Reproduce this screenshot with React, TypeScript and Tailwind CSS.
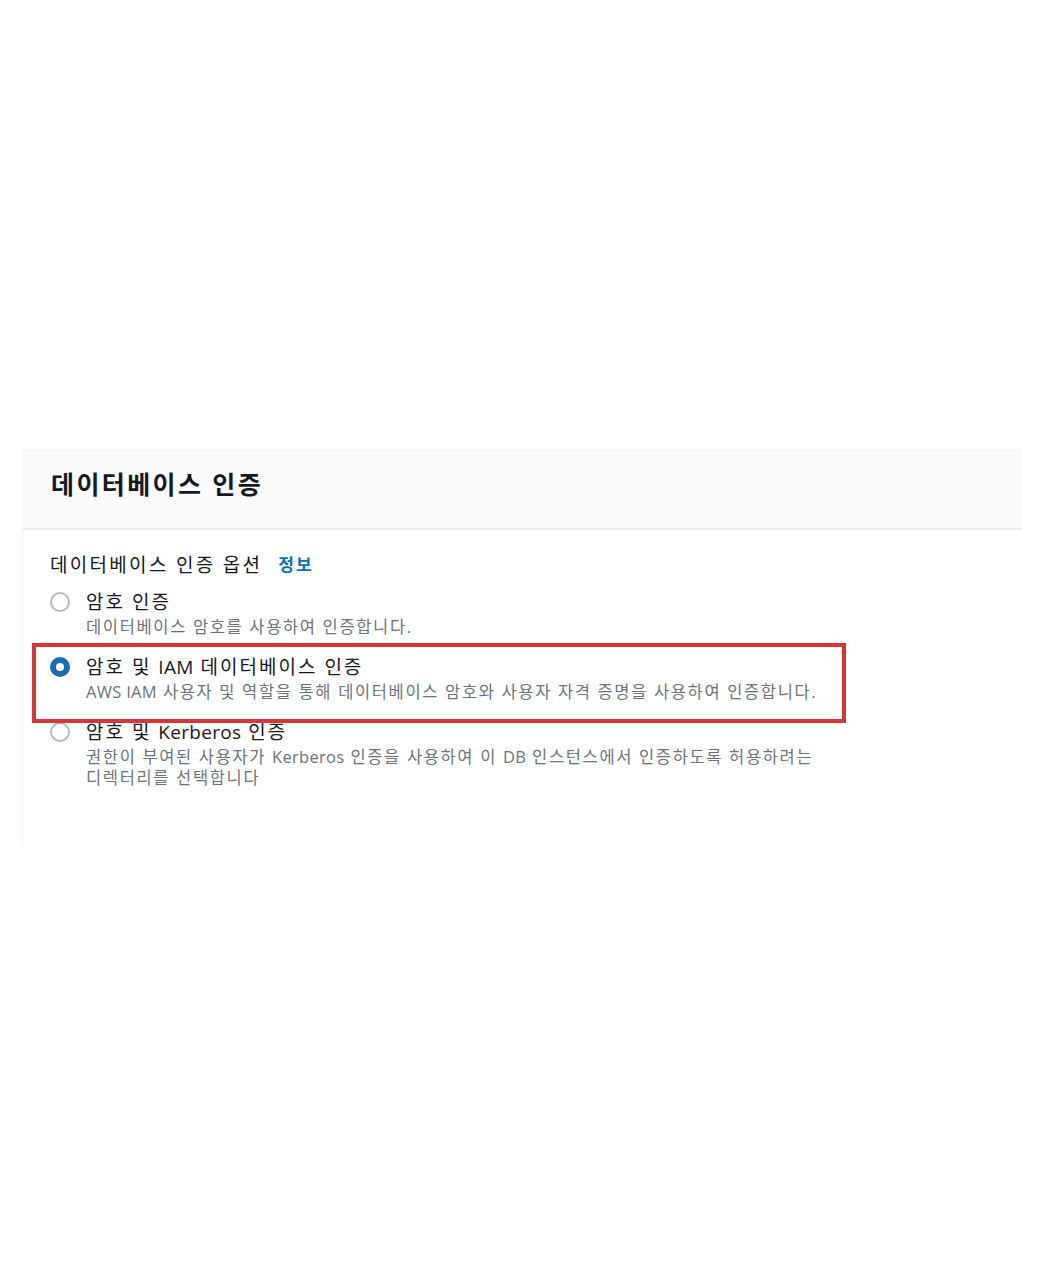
import React from "react";

const font = { fontFamily: '"Open Sans", "Noto Sans CJK KR", sans-serif' };

function T({ text }: { text: string }) {
  const parts = text.split(/([A-Za-z][A-Za-z ]*[A-Za-z]|[A-Za-z])/);
  return (
    <>
      {parts.map((p, i) =>
        /^[A-Za-z]/.test(p) ? (
          <span key={i} className="tracking-[0.3px]">
            {p}
          </span>
        ) : (
          <React.Fragment key={i}>{p}</React.Fragment>
        )
      )}
    </>
  );
}

function Radio({ checked }: { checked?: boolean }) {
  return checked ? (
    <span className="mt-[2px] flex h-[20px] w-[20px] shrink-0 items-center justify-center rounded-full bg-[#1a6cb8]">
      <span className="h-[8px] w-[8px] rounded-full bg-white" />
    </span>
  ) : (
    <span className="mt-[2px] h-[20px] w-[20px] shrink-0 rounded-full border-2 border-[#b4bcbe] bg-white" />
  );
}

function Option({
  title,
  desc,
  checked,
}: {
  title: React.ReactNode;
  desc: React.ReactNode;
  checked?: boolean;
}) {
  return (
    <div className="flex gap-[16px]">
      <Radio checked={checked} />
      <div className="flex flex-col">
        <div className="text-[19px] leading-[24px] tracking-[2px] text-[#16191f]">{title}</div>
        <div className="mt-[2px] text-[16.5px] leading-[21px] tracking-[1.65px] text-[#6b747c]">{desc}</div>
      </div>
    </div>
  );
}

export default function App() {
  return (
    <div className="relative h-[1274px] w-full bg-white" style={font}>
      <div className="h-[449px]" />
      <div className="mx-[22px] w-[1000px]">
        <div className="h-[81px] border-b-2 border-[#eceeee] bg-[#fafafa] pl-[29px] pt-[19px]">
          <h2 className="text-[25px] font-bold leading-[32px] tracking-[2.4px] text-[#16191f]">데이터베이스 인증</h2>
        </div>
        <div className="h-[315px] border-l border-[#f0f1f1] pl-[27px] pt-[23px]">
          <div className="flex items-center gap-[16px] text-[19px] leading-[24px] text-[#16191f]">
            <span className="tracking-[2.3px]">데이터베이스 인증 옵션</span>
            <span className="text-[17px] font-bold tracking-[2px] text-[#0073bb]">정보</span>
          </div>
          <div className="mt-[13px] flex flex-col gap-[18px]">
            <Option title="암호 인증" desc="데이터베이스 암호를 사용하여 인증합니다." />
            <Option
              checked
              title={<T text="암호 및 IAM 데이터베이스 인증" />}
              desc={<T text="AWS IAM 사용자 및 역할을 통해 데이터베이스 암호와 사용자 자격 증명을 사용하여 인증합니다." />}
            />
            <Option
              title={<T text="암호 및 Kerberos 인증" />}
              desc={
                <>
                  <T text="권한이 부여된 사용자가 Kerberos 인증을 사용하여 이 DB 인스턴스에서 인증하도록 허용하려는" />
                  <br />
                  디렉터리를 선택합니다
                </>
              }
            />
          </div>
        </div>
      </div>
      <div className="pointer-events-none absolute left-[32px] top-[643px] h-[80px] w-[814px] border-4 border-[#d8363a]" />
    </div>
  );
}
